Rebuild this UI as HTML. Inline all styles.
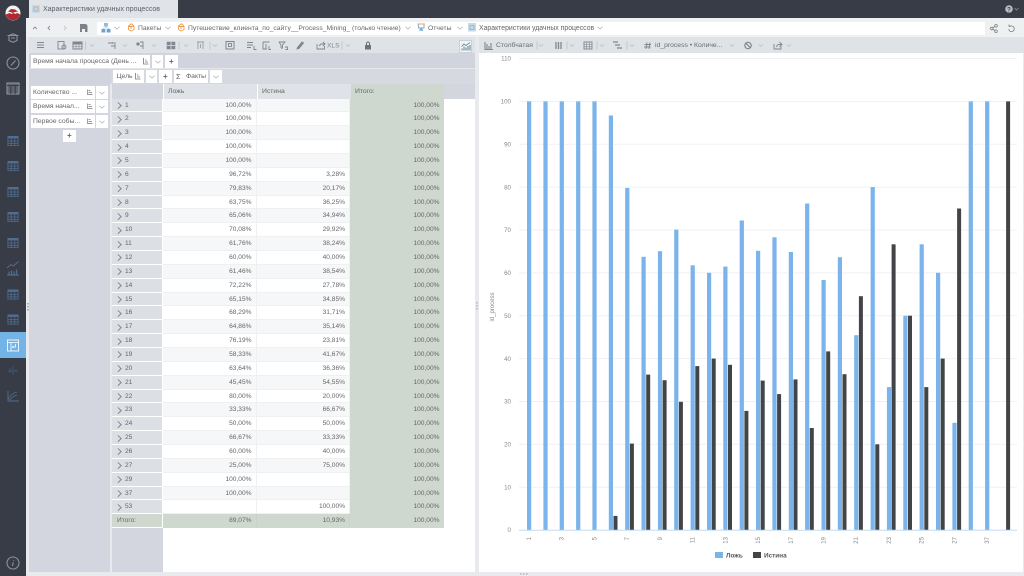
<!DOCTYPE html>
<html lang="ru"><head><meta charset="utf-8"><title>Характеристики удачных процессов</title>
<style>
*{box-sizing:border-box}
html,body{margin:0;padding:0;width:1024px;height:576px;overflow:hidden;background:#e9eaed;font-family:"Liberation Sans","Noto Sans CJK SC",sans-serif;font-size:6.8px;color:#666}
.a{position:absolute}
.t{position:absolute;white-space:nowrap;line-height:10px;height:10px}
.chip{position:absolute;background:#fff;height:13px}
#rows{position:absolute;left:112px;top:98.5px;width:332px}
.r{display:flex;height:13.87px;line-height:14px;font-size:6.6px;color:#666}
.r>b{font-weight:normal;border-bottom:1px solid #eef0f2}
.r .h{width:51px;background:#dcdfe3;padding-left:13px;position:relative;border-bottom:1px solid #fff;border-right:1px solid #fff;font-size:6.6px}
.r .h:before{content:"";position:absolute;left:4px;top:4.5px;width:3.5px;height:3.5px;border-top:.7px solid #888;border-right:.7px solid #888;transform:rotate(45deg)}
.r .c{width:93.5px;text-align:right;padding-right:4px;border-right:1px solid #eef0f2}
.r .s{width:93.5px;text-align:right;padding-right:4px;background:#ced8cf;border-bottom:1px solid #ced8cf}
.o .c{background:#f6f7f9}.e .c{background:#fff}
.f .h{background:#ced8cf;padding-left:5px;font-size:6.6px}.f .h:before{display:none}.f .c{background:#ced8cf;border-color:#c8d3c9;border-bottom:1px solid #ced8cf}
svg{position:absolute;overflow:visible}
</style></head><body>
<svg width="0" height="0" style="position:absolute"><defs>
<symbol id="tb" viewBox="0 0 11 10"><rect x="0" y="0" width="11" height="2.4" fill="#4f6d8f"/><path d="M.4 2v7.6h10.2V2M0 5h11M0 7.4h11M3.7 2v7.6M7.3 2v7.6" fill="none" stroke="#4f6d8f" stroke-width=".8"/></symbol>
<symbol id="ch" viewBox="0 0 6 4"><path d="M.5 .8 3 3.2 5.5 .8" fill="none" stroke="#a4a9b0" stroke-width=".7"/></symbol>
</defs></svg>

<!-- frame -->
<div class="a" style="left:0;top:0;width:1024px;height:18px;background:#383c47"></div>
<div class="a" style="left:0;top:0;width:26px;height:576px;background:#383c47"></div>
<div class="a" style="left:29px;top:0;width:149px;height:18px;background:#e0e3e7"></div>
<svg style="left:32px;top:5px" width="8" height="8"><rect width="8" height="8" fill="#bcdcf3"/><rect x="2" y="2" width="4" height="4" fill="none" stroke="#e0a060" stroke-width=".8"/></svg>
<div class="t" style="left:43px;top:4.5px;color:#5c5f66;font-size:7px">Характеристики удачных процессов</div>
<svg style="left:1004px;top:4px" width="16" height="10"><circle cx="5" cy="5" r="3.8" fill="#b8bbc0"/><text x="5" y="7.3" font-size="6" font-weight="bold" text-anchor="middle" fill="#383c47" font-family="Liberation Sans">?</text><path d="M10.5 4 12.5 6 14.5 4" fill="none" stroke="#8b8e95" stroke-width=".8"/></svg>

<!-- breadcrumbs -->
<div class="a" style="left:26px;top:18px;width:998px;height:19px;background:#eef0f1"></div>
<div class="a" style="left:97px;top:22px;width:888px;height:13px;background:#fff"></div>
<svg style="left:30px;top:23px" width="60" height="10" fill="none" stroke="#8a8f97" stroke-width=".9"><path d="M3 6 5 4 7 6M20 3 18 5 20 7"/><path stroke="#c4c7cc" d="M34 3 36 5 34 7"/><path fill="#7d8188" stroke="none" d="M50 1h6l1.500 1.500V9h-2.500V6h-3v3h-2z"/></svg>
<svg style="left:101px;top:22px" width="10" height="12"><rect x="3" y="1" width="4" height="3.500" fill="#8dbbe6"/><rect x=".5" y="7" width="3.800" height="3.500" fill="#6f9fd0"/><rect x="5.700" y="7" width="3.800" height="3.500" fill="#6f9fd0"/><path d="M5 4.500V6M2.500 7V6h5v1" stroke="#8dbbe6" fill="none" stroke-width=".6"/></svg>
<svg style="left:114px;top:26px" width="6" height="4"><use href="#ch" width="6" height="4"/></svg>
<svg style="left:127px;top:23px" width="8" height="9" fill="none" stroke="#ee9c45" stroke-width=".9"><path d="M1.500 3 4 1h1l2 2v3.500L4 8 1.500 6.500zM1.500 3.500h5.500"/><path stroke="#6fa8dc" d="M3 5h2"/></svg>
<div class="t" style="left:138px;top:23.500px;color:#666">Пакеты</div>
<svg style="left:165px;top:26px" width="6" height="4"><use href="#ch" width="6" height="4"/></svg>
<svg style="left:177px;top:23px" width="8" height="9" fill="none" stroke="#ee9c45" stroke-width=".9"><path d="M1.500 3 4 1h1l2 2v3.500L4 8 1.500 6.500zM1.500 3.500h5.500"/><path stroke="#6fa8dc" d="M3 5h2"/></svg>
<div class="t" style="left:188px;top:23.500px;color:#666;font-size:6.760px">Путешествие_клиента_по_сайту__Process_Mining_ (только чтение)</div>
<svg style="left:405px;top:26px" width="6" height="4"><use href="#ch" width="6" height="4"/></svg>
<svg style="left:417px;top:23px" width="9" height="9" fill="none" stroke="#ee9c45" stroke-width=".9"><path d="M.5 1h7.500"/><path stroke="#6fa8dc" d="M1.500 1.500V5h5.500V1.500M4.200 5v3M2.500 8l1.700-3 1.700 3"/></svg>
<div class="t" style="left:428px;top:23.500px;color:#666">Отчеты</div>
<svg style="left:457px;top:26px" width="6" height="4"><use href="#ch" width="6" height="4"/></svg>
<svg style="left:468px;top:23px" width="8" height="9"><rect width="8" height="8.500" fill="#bcdcf3"/><rect x="2" y="2.500" width="4" height="4" fill="none" stroke="#e0a060" stroke-width=".8"/></svg>
<div class="t" style="left:479px;top:23.500px;color:#666;font-size:6.900px">Характеристики удачных процессов</div>
<svg style="left:597px;top:26px" width="6" height="4"><use href="#ch" width="6" height="4"/></svg>
<svg style="left:990px;top:24px" width="26" height="9" fill="none" stroke="#7d8188" stroke-width=".8"><circle cx="1.800" cy="4.500" r="1.300"/><circle cx="6" cy="1.800" r="1.300"/><circle cx="6" cy="7.200" r="1.300"/><path d="M3 3.800 4.800 2.500M3 5.200 4.800 6.500"/><path d="M19 2h2.500a2.800 2.800 0 1 1-2.800 3M19 .5V2.300h1.800"/></svg>

<!-- left panel toolbar -->
<div class="a" style="left:29px;top:37px;width:446px;height:16px;background:#dfe2e6"></div>
<svg style="left:29px;top:37px" width="446" height="16" fill="none" stroke="#82868e" stroke-width=".9">
<path d="M8 5.500h7M8 8h7M8 10.500h7"/>
<rect x="29" y="4.500" width="6" height="7.500"/><circle cx="35" cy="10" r="2"/>
<rect x="44" y="5" width="9" height="7" stroke-width="1"/><rect x="44" y="5" width="9" height="2" fill="#82868e"/><path d="M47 7v5M50 7v5M44 9.500h9" stroke-width=".6"/>
<path stroke="#c2c5cb" d="M56.500 4.500v8M61 7.500l2 2 2-2"/>
<path d="M79 6h5M84 5v2M82 9h4M86 5v7"/><path stroke="#c2c5cb" d="M94 7.500l2 2 2-2"/>
<circle cx="109" cy="7" r="1.200" fill="#82868e"/><path d="M111 5h3v7M111 9h3"/><path stroke="#c2c5cb" d="M123 7.500l2 2 2-2"/>
<rect x="138" y="5" width="8" height="7" fill="#82868e" stroke-width=".5"/><path stroke="#dfe2e6" d="M142 5v7M138 8.500h8" stroke-width=".8"/>
<path stroke="#c2c5cb" d="M150 4.500v8M155 7.500l2 2 2-2"/>
<path d="M168 5h7M169 5v7M174 5v7M171.500 7v4" stroke="#9a9ea5"/><path stroke="#c2c5cb" d="M181 4.500v8M184 7.500l2 2 2-2"/>
<rect x="197" y="4.500" width="8" height="7.500" stroke-width="1"/><rect x="199.500" y="6.500" width="3" height="3"/>
<path d="M218 5.500h6M218 8h6M218 10.500h4M225 9v3.500h2.500"/>
<path d="M234 5h6.500M234 5v7h4M237 7v5M240 9v3.500h2"/>
<path d="M250 5h6l-2.500 3v3.500M253 11.500l-1-1V8l-2-3M256 10h2.500v2.500h-2"/>
<path d="M268 12l2-.5 4.500-5.500-1.500-1-4.500 5.500z" fill="#82868e"/>
<path d="M288 7v5h7.500V9M290 9l2-2h4M294 5l2 2-2 2"/>
<text x="298" y="10.700" font-size="6.600" fill="#82868e" stroke="none" font-family="Liberation Sans">XLS</text>
<path stroke="#c2c5cb" d="M313 4.500v8M317 7.500l2 2 2-2"/>
<rect x="336" y="8" width="6" height="4.500" fill="#6d7179" stroke="none"/><path d="M337.500 8V6.500a1.500 1.500 0 0 1 3 0V8" stroke="#6d7179" stroke-width="1"/>
</svg>
<div class="a" style="left:459px;top:39.500px;width:13px;height:13px;background:#eef6f8;border:1px solid #c7d1d6"></div>
<svg style="left:461px;top:41.500px" width="10" height="9" fill="none" stroke="#4d6d80" stroke-width=".7"><path d="M.5 4.500 3 2l2 1.500L9 .5"/><path d="M1 8.500V6.500M3 8.500V4.500M5 8.500V5.500M7 8.500V4M9 8.500V3" stroke-width=".9"/></svg>

<!-- pivot area -->
<div class="a" style="left:29px;top:53px;width:446px;height:31px;background:#d1d4dc"></div>
<div class="a" style="left:29px;top:68px;width:446px;height:1px;background:#e3e5e9"></div>
<div class="a" style="left:111px;top:69px;width:364px;height:15px;background:#d6d9df"></div>
<div class="chip" style="left:31px;top:55px;width:119px"></div>
<div class="t" style="left:33px;top:56.500px">Время начала процесса (День ...</div>
<svg style="left:143px;top:57px" width="6" height="8" fill="none" stroke="#777" stroke-width=".8"><path d="M.5 1v6h5M2 3h1.500M2 5h3"/></svg>
<div class="chip" style="left:152px;top:55px;width:11px"></div><svg style="left:155px;top:60px" width="6" height="4"><use href="#ch" width="6" height="4"/></svg>
<div class="chip" style="left:165px;top:55px;width:13px"></div><div class="t" style="left:169px;top:56.500px;font-size:8px;font-weight:bold">+</div>

<div class="chip" style="left:113px;top:70px;width:31px"></div><div class="t" style="left:116.500px;top:71.500px">Цель</div>
<svg style="left:135px;top:72px" width="6" height="8" fill="none" stroke="#777" stroke-width=".8"><path d="M.5 1v6h5M2 3h1.500M2 5h3"/></svg>
<div class="chip" style="left:146px;top:70px;width:11px"></div><svg style="left:149px;top:75px" width="6" height="4"><use href="#ch" width="6" height="4"/></svg>
<div class="chip" style="left:159px;top:70px;width:13px"></div><div class="t" style="left:163px;top:71.500px;font-size:8px;font-weight:bold">+</div>
<div class="chip" style="left:174px;top:70px;width:34px"></div><div class="t" style="left:176px;top:71.500px;font-size:7.500px">Σ</div><div class="t" style="left:186px;top:71.500px">Факты</div>
<div class="chip" style="left:210px;top:70px;width:12px"></div><svg style="left:213px;top:75px" width="6" height="4"><use href="#ch" width="6" height="4"/></svg>

<div class="a" style="left:29px;top:84px;width:81px;height:488px;background:#d3d6de"></div>
<div class="chip" style="left:31px;top:86px;width:64px"></div><div class="t" style="left:33px;top:87.500px">Количество ...</div>
<div class="chip" style="left:96px;top:86px;width:12px"></div><svg style="left:99px;top:91px" width="6" height="4"><use href="#ch" width="6" height="4"/></svg>
<div class="chip" style="left:31px;top:100px;width:64px"></div><div class="t" style="left:33px;top:101.500px">Время начал...</div>
<div class="chip" style="left:96px;top:100px;width:12px"></div><svg style="left:99px;top:105px" width="6" height="4"><use href="#ch" width="6" height="4"/></svg>
<div class="chip" style="left:31px;top:115px;width:64px"></div><div class="t" style="left:33px;top:116.500px">Первое собы...</div>
<div class="chip" style="left:96px;top:115px;width:12px"></div><svg style="left:99px;top:120px" width="6" height="4"><use href="#ch" width="6" height="4"/></svg>
<svg style="left:87px;top:88px" width="6" height="36" fill="none" stroke="#777" stroke-width=".7"><path d="M.5 1.500v5h5M1.500 2.500h2M1.500 4.500h3.500M.5 15.500v5h5M1.500 16.500h2M1.500 18.500h3.500M.5 30.500v5h5M1.500 31.500h2M1.500 33.500h3.500"/></svg>
<div class="chip" style="left:63px;top:130px;width:13px;height:12px"></div><div class="t" style="left:67px;top:130.500px;font-size:8px;font-weight:bold">+</div>

<!-- table -->
<div class="a" style="left:110px;top:84px;width:365px;height:488px;background:#fff"></div>
<div class="a" style="left:110px;top:84px;width:2px;height:488px;background:#e9eaed"></div>
<div class="a" style="left:112px;top:84px;width:51px;height:488px;background:#d3d6de"></div>
<div class="a" style="left:163.500px;top:84px;width:93px;height:14.500px;background:#dfe2e6"></div>
<div class="a" style="left:257.500px;top:84px;width:93px;height:14.500px;background:#dfe2e6"></div>
<div class="a" style="left:351px;top:84px;width:92.500px;height:14.500px;background:#ced8cf"></div>
<div class="a" style="left:444px;top:84px;width:31px;height:14.500px;background:#d3d6de"></div>
<div class="t" style="left:168px;top:87px">Ложь</div><div class="t" style="left:262px;top:87px">Истина</div><div class="t" style="left:355px;top:87px">Итого:</div>
<div id="rows">
<div class="r o"><b class="h">1</b><b class="c">100,00%</b><b class="c"></b><b class="s">100,00%</b></div>
<div class="r e"><b class="h">2</b><b class="c">100,00%</b><b class="c"></b><b class="s">100,00%</b></div>
<div class="r o"><b class="h">3</b><b class="c">100,00%</b><b class="c"></b><b class="s">100,00%</b></div>
<div class="r e"><b class="h">4</b><b class="c">100,00%</b><b class="c"></b><b class="s">100,00%</b></div>
<div class="r o"><b class="h">5</b><b class="c">100,00%</b><b class="c"></b><b class="s">100,00%</b></div>
<div class="r e"><b class="h">6</b><b class="c">96,72%</b><b class="c">3,28%</b><b class="s">100,00%</b></div>
<div class="r o"><b class="h">7</b><b class="c">79,83%</b><b class="c">20,17%</b><b class="s">100,00%</b></div>
<div class="r e"><b class="h">8</b><b class="c">63,75%</b><b class="c">36,25%</b><b class="s">100,00%</b></div>
<div class="r o"><b class="h">9</b><b class="c">65,06%</b><b class="c">34,94%</b><b class="s">100,00%</b></div>
<div class="r e"><b class="h">10</b><b class="c">70,08%</b><b class="c">29,92%</b><b class="s">100,00%</b></div>
<div class="r o"><b class="h">11</b><b class="c">61,76%</b><b class="c">38,24%</b><b class="s">100,00%</b></div>
<div class="r e"><b class="h">12</b><b class="c">60,00%</b><b class="c">40,00%</b><b class="s">100,00%</b></div>
<div class="r o"><b class="h">13</b><b class="c">61,46%</b><b class="c">38,54%</b><b class="s">100,00%</b></div>
<div class="r e"><b class="h">14</b><b class="c">72,22%</b><b class="c">27,78%</b><b class="s">100,00%</b></div>
<div class="r o"><b class="h">15</b><b class="c">65,15%</b><b class="c">34,85%</b><b class="s">100,00%</b></div>
<div class="r e"><b class="h">16</b><b class="c">68,29%</b><b class="c">31,71%</b><b class="s">100,00%</b></div>
<div class="r o"><b class="h">17</b><b class="c">64,86%</b><b class="c">35,14%</b><b class="s">100,00%</b></div>
<div class="r e"><b class="h">18</b><b class="c">76,19%</b><b class="c">23,81%</b><b class="s">100,00%</b></div>
<div class="r o"><b class="h">19</b><b class="c">58,33%</b><b class="c">41,67%</b><b class="s">100,00%</b></div>
<div class="r e"><b class="h">20</b><b class="c">63,64%</b><b class="c">36,36%</b><b class="s">100,00%</b></div>
<div class="r o"><b class="h">21</b><b class="c">45,45%</b><b class="c">54,55%</b><b class="s">100,00%</b></div>
<div class="r e"><b class="h">22</b><b class="c">80,00%</b><b class="c">20,00%</b><b class="s">100,00%</b></div>
<div class="r o"><b class="h">23</b><b class="c">33,33%</b><b class="c">66,67%</b><b class="s">100,00%</b></div>
<div class="r e"><b class="h">24</b><b class="c">50,00%</b><b class="c">50,00%</b><b class="s">100,00%</b></div>
<div class="r o"><b class="h">25</b><b class="c">66,67%</b><b class="c">33,33%</b><b class="s">100,00%</b></div>
<div class="r e"><b class="h">26</b><b class="c">60,00%</b><b class="c">40,00%</b><b class="s">100,00%</b></div>
<div class="r o"><b class="h">27</b><b class="c">25,00%</b><b class="c">75,00%</b><b class="s">100,00%</b></div>
<div class="r e"><b class="h">29</b><b class="c">100,00%</b><b class="c"></b><b class="s">100,00%</b></div>
<div class="r o"><b class="h">37</b><b class="c">100,00%</b><b class="c"></b><b class="s">100,00%</b></div>
<div class="r e"><b class="h">53</b><b class="c"></b><b class="c">100,00%</b><b class="s">100,00%</b></div>
<div class="r f"><b class="h">Итого:</b><b class="c">89,07%</b><b class="c">10,93%</b><b class="s">100,00%</b></div>
</div>
<svg style="left:27px;top:303px" width="2" height="8"><path d="M1 0v1.500M1 3v1.500M1 6v1.500" stroke="#777" stroke-width="1"/></svg>
<svg style="left:476px;top:302px" width="2" height="8"><path d="M1 0v1.500M1 3v1.500M1 6v1.500" stroke="#999" stroke-width="1"/></svg>
<svg style="left:520px;top:573px" width="8" height="2"><path d="M0 1h1.500M3 1h1.500M6 1h1.500" stroke="#999" stroke-width="1"/></svg>

<!-- right panel -->
<div class="a" style="left:479px;top:37px;width:545px;height:16px;background:#dfe2e6"></div>
<div class="a" style="left:479px;top:53px;width:544px;height:519px;background:#fff"></div>
<svg style="left:479px;top:37px" width="400" height="16" fill="none" stroke="#82868e" stroke-width=".9">
<path d="M6 5v7.500h8M8 7v5M10 9v3M12 6v6" stroke-width="1.100"/>
<path stroke="#c2c5cb" d="M58 4.500v8M60 7.500l2 2 2-2"/>
<path d="M77 5v7M79.500 5v7M82 5v7" stroke-width="1.300"/>
<path stroke="#c2c5cb" d="M88 4.500v8M91 7.500l2 2 2-2"/>
<rect x="105" y="5" width="8" height="7"/><path d="M105 7.500h8M105 9.800h8M107.700 5v7M110.300 5v7" stroke-width=".6"/>
<path stroke="#c2c5cb" d="M118 4.500v8M121 7.500l2 2 2-2"/>
<path d="M134 5h5M136 8h5M138 11h5" stroke-width="1.200"/>
<path stroke="#c2c5cb" d="M148 4.500v8M151 7.500l2 2 2-2"/>
<path d="M168 5.500l-1 6.500M171 5.500l-1 6.500M165.500 7.500h6.500M165 10h6.500"/>
<path stroke="#c2c5cb" d="M251 7.500l2 2 2-2"/>
<circle cx="269" cy="8.500" r="3.200" stroke-width="1.200"/><path d="M266.800 6.200l4.500 4.500" stroke-width="1.100"/>
<path stroke="#c2c5cb" d="M280 7.500l2 2 2-2"/>
<path d="M295 7v5h7V9.500M297 10l2-2.500h3.500M300.500 5l2.500 2.500-2.500 2.500"/>
<path stroke="#c2c5cb" d="M308 7.500l2 2 2-2"/>
</svg>
<div class="t" style="left:496px;top:40.500px;font-size:6.800px;color:#6a6d74">Столбчатая</div>
<div class="t" style="left:655px;top:40.500px;font-size:6.800px;color:#6a6d74">id_process • Количе...</div>

<svg style="left:0;top:0" width="1024" height="576" font-family="Liberation Sans">
<g stroke="#f0f1f2" stroke-width="1">
<path d="M519 58.500H1017M519 101.400H1017M519 144.300H1017M519 187.100H1017M519 230H1017M519 272.900H1017M519 315.700H1017M519 358.600H1017M519 401.500H1017M519 444.300H1017M519 487.200H1017"/></g>
<g font-size="6.200" fill="#8a8a8a" text-anchor="end">
<text x="511" y="60.500">110</text><text x="511" y="103.500">100</text><text x="511" y="146.500">90</text><text x="511" y="189.500">80</text><text x="511" y="232">70</text><text x="511" y="275">60</text><text x="511" y="318">50</text><text x="511" y="361">40</text><text x="511" y="403.500">30</text><text x="511" y="446.500">20</text><text x="511" y="489.500">10</text><text x="511" y="532">0</text>
</g>
<text transform="translate(494 307) rotate(-90)" font-size="6" fill="#8a8a8a" text-anchor="middle">id_process</text>
<g transform="translate(0 530) scale(1 -1)" fill="#7ab4ea">
<rect x="527" width="4.200" height="428.600"/><rect x="543.400" width="4.200" height="428.600"/><rect x="559.700" width="4.200" height="428.600"/><rect x="576.100" width="4.200" height="428.600"/><rect x="592.400" width="4.200" height="428.600"/><rect x="608.800" width="4.200" height="414.500"/><rect x="625.200" width="4.200" height="342.100"/><rect x="641.500" width="4.200" height="273.200"/><rect x="657.900" width="4.200" height="278.800"/><rect x="674.200" width="4.200" height="300.400"/><rect x="690.600" width="4.200" height="264.700"/><rect x="707" width="4.200" height="257.200"/><rect x="723.300" width="4.200" height="263.400"/><rect x="739.700" width="4.200" height="309.500"/><rect x="756" width="4.200" height="279.200"/><rect x="772.400" width="4.200" height="292.700"/><rect x="788.800" width="4.200" height="278"/><rect x="805.100" width="4.200" height="326.500"/><rect x="821.500" width="4.200" height="250"/><rect x="837.800" width="4.200" height="272.800"/><rect x="854.200" width="4.200" height="194.800"/><rect x="870.600" width="4.200" height="342.900"/><rect x="886.900" width="4.200" height="142.900"/><rect x="903.300" width="4.200" height="214.300"/><rect x="919.600" width="4.200" height="285.700"/><rect x="936" width="4.200" height="257.200"/><rect x="952.400" width="4.200" height="107.200"/><rect x="968.700" width="4.200" height="428.600"/><rect x="985.100" width="4.200" height="428.600"/>
</g>
<g transform="translate(0 530) scale(1 -1)" fill="#434447">
<rect x="613.500" width="4" height="14.100"/><rect x="629.900" width="4" height="86.400"/><rect x="646.200" width="4" height="155.400"/><rect x="662.600" width="4" height="149.800"/><rect x="678.900" width="4" height="128.200"/><rect x="695.300" width="4" height="163.900"/><rect x="711.700" width="4" height="171.400"/><rect x="728" width="4" height="165.200"/><rect x="744.400" width="4" height="119.100"/><rect x="760.700" width="4" height="149.400"/><rect x="777.100" width="4" height="135.900"/><rect x="793.500" width="4" height="150.600"/><rect x="809.800" width="4" height="102"/><rect x="826.200" width="4" height="178.600"/><rect x="842.500" width="4" height="155.800"/><rect x="858.900" width="4" height="233.800"/><rect x="875.300" width="4" height="85.700"/><rect x="891.600" width="4" height="285.700"/><rect x="908" width="4" height="214.300"/><rect x="924.300" width="4" height="142.900"/><rect x="940.700" width="4" height="171.400"/><rect x="957.100" width="4" height="321.500"/><rect x="1006.100" width="4" height="428.600"/>
</g>
<path d="M519 530.200H1017" stroke="#c6dcf2" stroke-width="1"/>
<g font-size="6" fill="#8a8a8a" text-anchor="end">
<text transform="translate(531 537) rotate(-90)">1</text><text transform="translate(563.700 537) rotate(-90)">3</text><text transform="translate(596.400 537) rotate(-90)">5</text><text transform="translate(629.200 537) rotate(-90)">7</text><text transform="translate(661.900 537) rotate(-90)">9</text><text transform="translate(694.600 537) rotate(-90)">11</text><text transform="translate(727.300 537) rotate(-90)">13</text><text transform="translate(760 537) rotate(-90)">15</text><text transform="translate(792.800 537) rotate(-90)">17</text><text transform="translate(825.500 537) rotate(-90)">19</text><text transform="translate(858.200 537) rotate(-90)">21</text><text transform="translate(890.900 537) rotate(-90)">23</text><text transform="translate(923.600 537) rotate(-90)">25</text><text transform="translate(956.400 537) rotate(-90)">27</text><text transform="translate(989.100 537) rotate(-90)">37</text>
</g>
<rect x="715" y="552" width="8" height="6" fill="#7ab4ea"/>
<text x="726" y="557.500" font-size="6.400" font-weight="bold" fill="#555">Ложь</text>
<rect x="753" y="552" width="8" height="6" fill="#434447"/>
<text x="764" y="557.500" font-size="6.400" font-weight="bold" fill="#555">Истина</text>
</svg>

<!-- sidebar icons -->
<svg style="left:0;top:0" width="26" height="576" fill="none">
<circle cx="13" cy="13" r="7.500" fill="#f2f2f2"/><path d="M5.700 14.500a7.500 7.500 0 0 0 14.600 0l-3-1.500-2 1-1.500-1-2.500 1-1.500-1z" fill="#b02a30"/><path d="M8 11.500l3-2.500 4 .5 3 2-3 .5-2.500 1-2-1z" fill="#b02a30"/>
<g stroke="#8d929c" stroke-width="1.100"><path d="M9 35.500 13 33.800l4 1.700v5l-4 1.800-4-1.800zM7.500 35.500h11M11 38h4"/>
<circle cx="13" cy="63" r="6"/><path d="M15.500 60.500 11 65.500"/>
<rect x="7" y="83" width="12" height="11" fill="#5f636c" stroke="#8d929c"/><path d="M10.800 85.500v8.500M15.200 85.500v8.500M7 85.500h12" stroke="#383c47"/>
<circle cx="13" cy="563" r="6"/><path d="M13.700 560v.8M13.200 562.300 12.500 566"/></g>
<use href="#tb" x="7.500" y="136" width="11" height="10"/>
<use href="#tb" x="7.500" y="161" width="11" height="10"/>
<use href="#tb" x="7.500" y="187" width="11" height="10"/>
<use href="#tb" x="7.500" y="212" width="11" height="10"/>
<use href="#tb" x="7.500" y="238" width="11" height="10"/>
<path d="M7 268 11 264.500l2.500 1.500 5-4.500" stroke="#4f6d8f" stroke-width="1"/><path d="M7 275h12M9 274.500v-3M11.500 274.500v-4M14 274.500v-3M16.500 274.500v-5" stroke="#4f6d8f" stroke-width="1.200"/>
<use href="#tb" x="7.500" y="289.500" width="11" height="10"/>
<use href="#tb" x="7.500" y="314.500" width="11" height="10"/>
<rect x="0" y="332" width="26" height="26" fill="#73b3e5"/>
<rect x="7.500" y="340" width="11" height="11" stroke="#e8f3fb" stroke-width="1"/><path d="M7.500 342.500h11M11 342.500v8.500M15.500 344v3h-3M13.500 346l-1 1 1 1" stroke="#fff" stroke-width=".8"/>
<path d="M8 371h10M10 368v5M13 366v9M16 369v3" stroke="#3e5570" stroke-width="1"/>
<path d="M8 391v10h11M8 400c2-5 5-7 9-8M10 400c2-3 4-4 7-5" stroke="#4f6d8f" stroke-width=".9"/>
</svg>
</body></html>
